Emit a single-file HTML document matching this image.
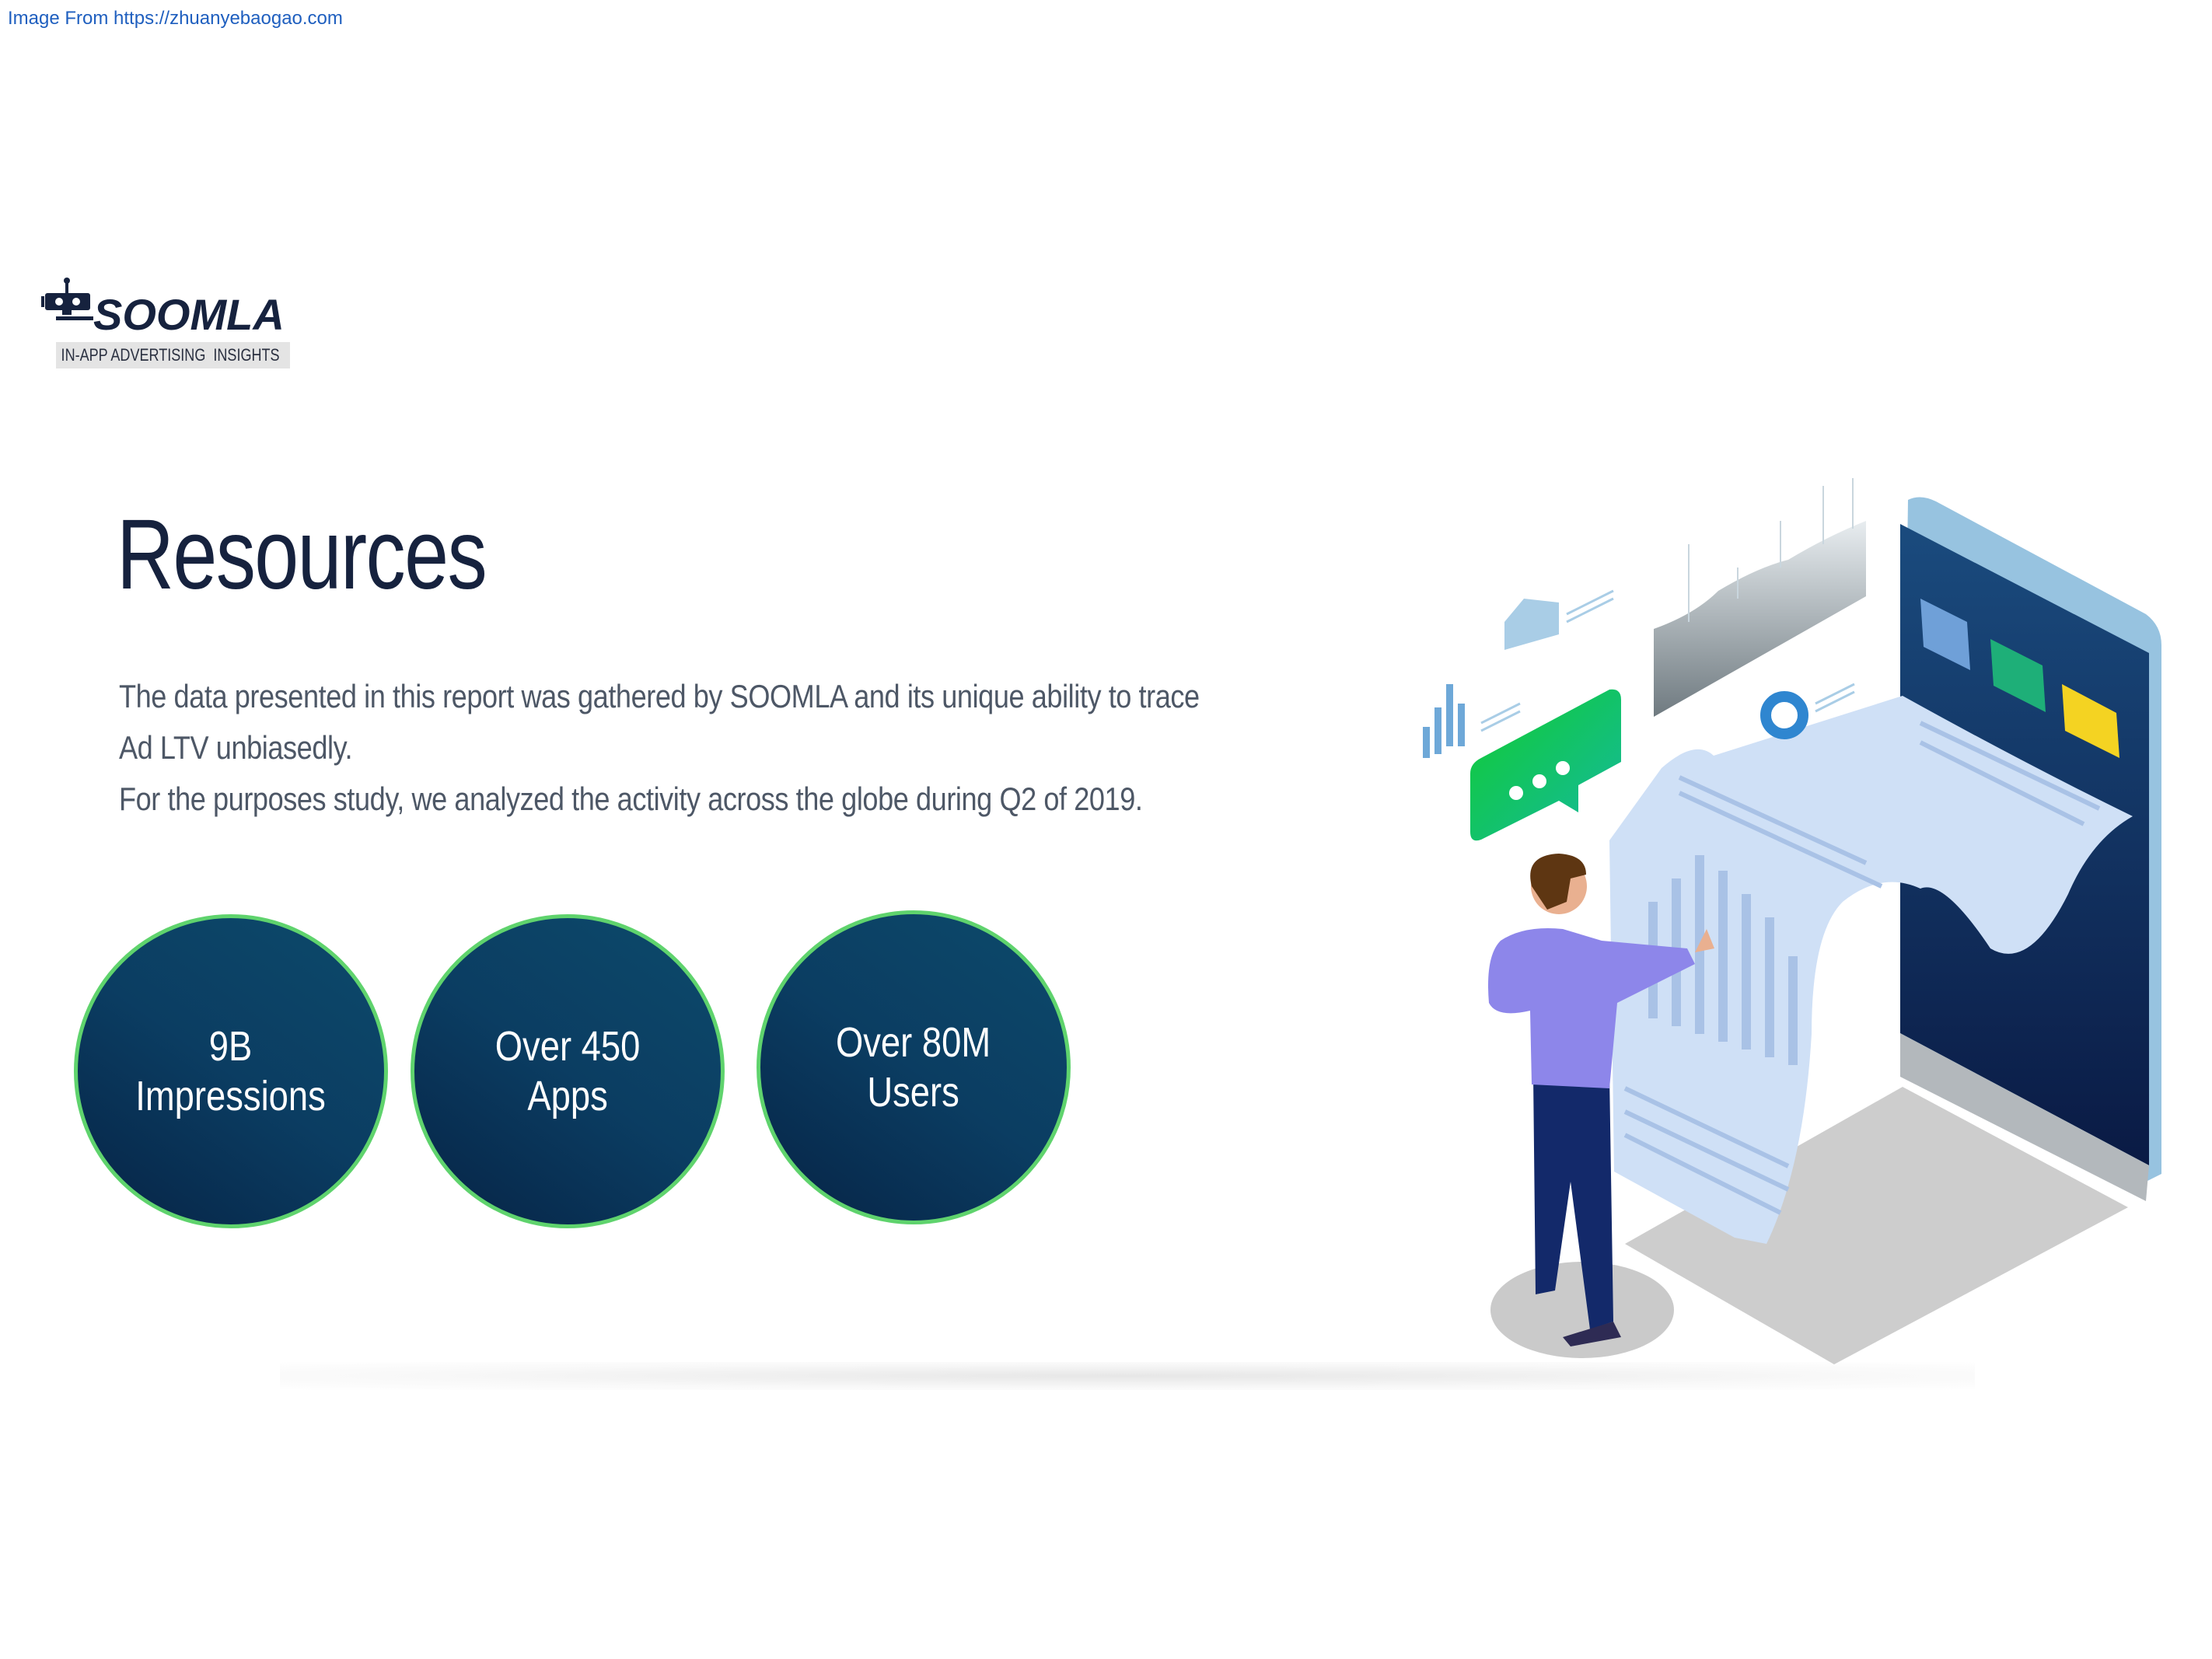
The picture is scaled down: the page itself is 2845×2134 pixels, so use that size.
<!DOCTYPE html>
<html><head><meta charset="utf-8"><style>
html,body{margin:0;padding:0;background:#fff;}
body{width:2845px;height:2134px;position:relative;overflow:hidden;font-family:"Liberation Sans",sans-serif;}
.src{position:absolute;left:10px;top:10px;font-size:24px;color:#1f5fbf;}
.logo{position:absolute;left:120px;top:372px;font-size:56px;font-weight:bold;font-style:italic;color:#16223e;letter-spacing:0px;white-space:nowrap;}
.tag{position:absolute;left:72px;top:440px;width:301px;height:34px;background:#e4e4e4;color:#2a3040;font-size:22px;line-height:34px;white-space:nowrap;overflow:hidden;}
.tag span{display:inline-block;transform:scaleX(0.82);transform-origin:left;padding-left:8px;}
.title{position:absolute;left:150px;top:640px;font-size:128px;color:#16223e;letter-spacing:-2px;transform:scaleX(0.8);transform-origin:left;white-space:nowrap;}
.p{position:absolute;left:153px;font-size:42px;color:#4d5766;white-space:nowrap;transform:scaleX(0.86);transform-origin:left;letter-spacing:-0.5px;}
.c{position:absolute;width:404px;height:404px;border-radius:50%;border:5px solid #5fd36d;background:linear-gradient(35deg,#062345 0%,#0b3d62 50%,#0d4a6b 100%);color:#fff;font-size:54px;line-height:64px;text-align:center;display:flex;align-items:center;justify-content:center;box-sizing:border-box;}
.c span{display:inline-block;transform:scaleX(0.84);}
.sh{position:absolute;left:360px;top:1752px;width:2180px;height:36px;background:radial-gradient(ellipse at center,rgba(228,228,228,0.9) 0%,rgba(242,242,242,0.5) 60%,rgba(255,255,255,0) 100%);}
</style></head><body>
<div class="src">Image From https://zhuanyebaogao.com</div>
<svg style="position:absolute;left:50px;top:355px" width="72" height="60" viewBox="0 0 72 60">
<line x1="36" y1="6" x2="36" y2="22" stroke="#16223e" stroke-width="4"/><circle cx="36" cy="6" r="4" fill="#16223e"/>
<rect x="8" y="22" width="58" height="22" rx="3" fill="#16223e"/><rect x="3" y="26" width="4" height="14" fill="#16223e"/>
<circle cx="26" cy="33" r="5" fill="#fff"/><circle cx="48" cy="33" r="5" fill="#fff"/>
<rect x="30" y="44" width="12" height="6" fill="#16223e"/><rect x="22" y="52" width="48" height="5" fill="#16223e"/>
</svg>
<div class="logo">SOOMLA</div>
<div class="tag"><span>IN-APP ADVERTISING&nbsp; INSIGHTS</span></div>
<div class="title">Resources</div>
<div class="p" style="top:872px">The data presented in this report was gathered by SOOMLA and its unique ability to trace</div>
<div class="p" style="top:938px">Ad LTV unbiasedly.</div>
<div class="p" style="top:1004px">For the purposes study, we analyzed the activity across the globe during Q2 of 2019.</div>
<div class="c" style="left:95px;top:1176px"><span>9B<br>Impressions</span></div>
<div class="c" style="left:528px;top:1176px"><span>Over 450<br>Apps</span></div>
<div class="c" style="left:973px;top:1171px"><span>Over 80M<br>Users</span></div>
<div class="sh"></div>
<svg style="position:absolute;left:0;top:0" width="2845" height="2134" viewBox="0 0 2845 2134">
<defs>
<linearGradient id="ph" x1="0" y1="0" x2="0" y2="1"><stop offset="0" stop-color="#1a4b7e"/><stop offset="1" stop-color="#0a1a44"/></linearGradient>
<linearGradient id="gr" x1="0" y1="0" x2="0" y2="1"><stop offset="0" stop-color="#e8edf0"/><stop offset="1" stop-color="#6f7a80"/></linearGradient>
<linearGradient id="gb" x1="0" y1="0" x2="1" y2="1"><stop offset="0" stop-color="#10cc30"/><stop offset="1" stop-color="#15b9a0"/></linearGradient>
</defs>
<polygon points="2090,1600 2447,1398 2737,1553 2359,1755" fill="#cdcdcd"/>
<path d="M2454,643 Q2470,635 2490,645 L2760,790 Q2780,805 2780,830 L2780,1510 L2740,1530 L2444,1380 Z" fill="#97c3e0"/>
<polygon points="2444,674 2764,840 2764,1499 2444,1329" fill="url(#ph)"/>
<polygon points="2444,1329 2764,1499 2760,1545 2444,1385" fill="#b3b8bc"/>
<polygon points="2470,770 2530,800 2534,862 2474,832" fill="#6fa0d8"/>
<polygon points="2560,822 2627,856 2631,916 2564,882" fill="#1eaf78"/>
<polygon points="2652,880 2722,917 2726,975 2656,940" fill="#f4d322"/>
<path d="M2137,988 Q2180,950 2204,972 L2447,895 Q2600,980 2743,1050 Q2690,1080 2660,1150 Q2610,1250 2560,1220 Q2500,1130 2470,1143 Q2420,1120 2370,1160 Q2330,1200 2330,1330 Q2320,1500 2272,1600 L2231,1592 L2076,1507 L2070,1081 Z" fill="#cfe0f6"/>
<g stroke="#a9c2e6" stroke-width="6">
<line x1="2160" y1="1000" x2="2400" y2="1110"/><line x1="2160" y1="1020" x2="2420" y2="1140"/><line x1="2470" y1="930" x2="2700" y2="1040"/><line x1="2470" y1="955" x2="2680" y2="1060"/>
<line x1="2090" y1="1400" x2="2300" y2="1500"/><line x1="2090" y1="1430" x2="2300" y2="1530"/><line x1="2090" y1="1460" x2="2290" y2="1560"/>
</g>
<g fill="#a9c2e6"><rect x="2120" y="1160" width="12" height="150"/><rect x="2150" y="1130" width="12" height="190"/><rect x="2180" y="1100" width="12" height="230"/><rect x="2210" y="1120" width="12" height="220"/><rect x="2240" y="1150" width="12" height="200"/><rect x="2270" y="1180" width="12" height="180"/><rect x="2300" y="1230" width="12" height="140"/></g>
<path d="M2127,809 Q2180,790 2210,760 Q2260,730 2300,720 Q2350,690 2400,670 L2400,767 L2127,922 Z" fill="url(#gr)"/>
<g stroke="#c9d6de" stroke-width="2" fill="none"><line x1="2172" y1="700" x2="2172" y2="800"/><line x1="2235" y1="730" x2="2235" y2="770"/><line x1="2290" y1="670" x2="2290" y2="730"/><line x1="2345" y1="625" x2="2345" y2="700"/><line x1="2383" y1="615" x2="2383" y2="680"/></g>
<polygon points="1935,800 1960,770 2005,775 2005,816 1935,836" fill="#a9cde6"/>
<g stroke="#a9cde6" stroke-width="3"><line x1="2015" y1="790" x2="2075" y2="760"/><line x1="2015" y1="800" x2="2075" y2="770"/><line x1="1905" y1="930" x2="1955" y2="905"/><line x1="1905" y1="940" x2="1955" y2="915"/><line x1="2335" y1="905" x2="2385" y2="880"/><line x1="2335" y1="915" x2="2385" y2="890"/></g>
<g fill="#6ea8d8"><rect x="1830" y="935" width="9" height="40"/><rect x="1845" y="910" width="9" height="60"/><rect x="1860" y="880" width="9" height="80"/><rect x="1875" y="905" width="9" height="55"/></g>
<circle cx="2295" cy="920" r="24" fill="none" stroke="#2f86d0" stroke-width="14"/>
<path d="M1905,975 L2070,887 Q2085,885 2085,900 L2085,980 L2030,1010 L2030,1045 L2005,1030 L1905,1080 Q1891,1085 1891,1070 L1891,995 Q1891,982 1905,975 Z" fill="url(#gb)"/>
<g fill="#fff"><circle cx="1950" cy="1020" r="9"/><circle cx="1980" cy="1005" r="9"/><circle cx="2010" cy="988" r="9"/></g>
<ellipse cx="2035" cy="1685" rx="118" ry="62" fill="#cacaca"/>
<path d="M1972,1383 L2070,1383 L2075,1700 L2045,1710 L2020,1520 L2000,1660 L1975,1665 Z" fill="#13296a"/>
<path d="M1930,1210 Q1960,1190 2010,1195 L2060,1210 L2170,1220 L2180,1240 L2080,1290 L2070,1400 L1970,1395 L1968,1300 Q1925,1310 1915,1290 Q1910,1230 1930,1210 Z" fill="#8d86ea"/>
<circle cx="2005" cy="1140" r="36" fill="#e9b090"/>
<path d="M1970,1140 Q1960,1100 2005,1098 Q2040,1100 2040,1125 L2020,1130 L2015,1160 L1990,1170 Z" fill="#5e3612"/>
<path d="M2180,1225 L2195,1195 L2205,1220 Z" fill="#e9b090"/>
<path d="M2010,1720 L2075,1700 L2085,1720 L2020,1732 Z" fill="#2e2b54"/>
</svg>
</body></html>
